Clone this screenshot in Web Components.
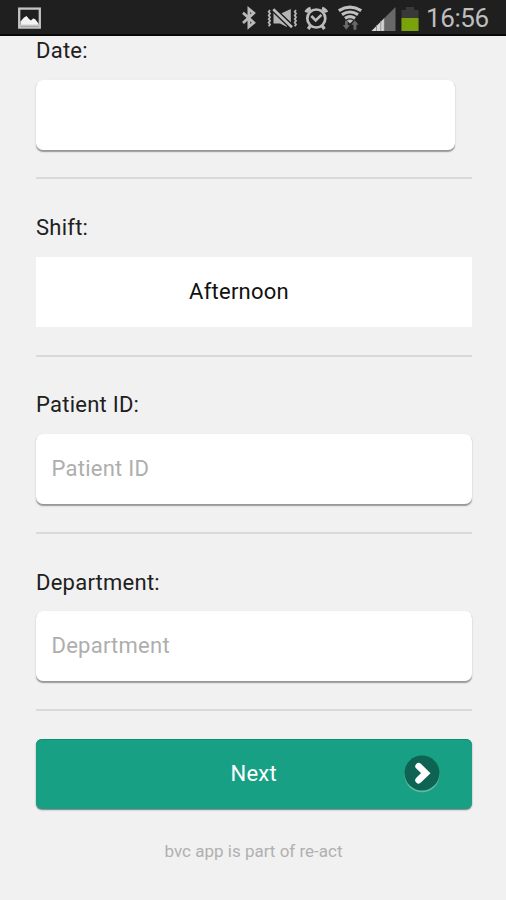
<!DOCTYPE html>
<html lang="en">
<head>
<meta charset="utf-8">
<title>bvc app</title>
<style>
html,body{margin:0;height:100%;background:#f1f1f1}
body{font-family:Roboto,"Liberation Sans",sans-serif;color:#222;overflow:hidden}
</style>
</head>
<body>
<bvc-screen>
  <status-bar slot="status" time="16:56"></status-bar>
  <form-field label="Date:" narrow></form-field>
  <form-field label="Shift:" select value="Afternoon"></form-field>
  <form-field label="Patient ID:" hint="Patient ID"></form-field>
  <form-field label="Department:" hint="Department"></form-field>
  <next-button>Next</next-button>
  <app-footer>bvc app is part of re-act</app-footer>
</bvc-screen>
<script>
class Base extends HTMLElement{
  connectedCallback(){
    if(!this.shadowRoot) this.attachShadow({mode:'open'}).innerHTML=this.view();
  }
}
customElements.define('bvc-screen',class extends Base{
  view(){return `<style>
    :host{display:flex;flex-direction:column;height:900px;width:506px}
    main{display:flex;flex-direction:column;padding:0 34px 0 36px}
    </style><slot name="status"></slot><main><slot></slot></main>`}
});
customElements.define('status-bar',class extends Base{
  view(){return `<style>
    :host{display:block;height:36px;background:#1f1f1f;box-sizing:border-box;border-bottom:2px solid #080808}
    .row{display:flex;align-items:center;height:36px;padding:0 17px 0 18px}
    svg{display:block;flex:none}
    .sp{flex:1}
    .time{font-size:26px;line-height:36px;color:#bebebe;width:63px;white-space:nowrap;letter-spacing:-.4px}
    </style><div class="row">
    <svg width="23" height="22" viewBox="0 0 23 22"><rect x="1.2" y="1.6" width="20.6" height="19" fill="none" stroke="#c4c4c4" stroke-width="2.3"/><path d="M2.5 19V14.5L6 10.5 8.5 9 11 12 13 13.5 15 11.5 17 12 20.5 16.5V19Z" fill="#f2f2f2"/><path d="M2 18.6H21" stroke="#c4c4c4" stroke-width="2"/></svg>
    <span class="sp"></span>
    <svg width="157" height="36" viewBox="240 0 157 36" style="margin-right:4px">
      <path d="M243 12.8L253.8 22.7 248.9 26.8V9L253.8 13.1 243 23" fill="none" stroke="#b9b9b9" stroke-width="2.8"/>
      <g fill="none" stroke="#b5b5b5" stroke-width="1.8"><path d="M270 10l-1.3 1.8 1.3 1.8-1.3 1.8 1.3 1.8-1.3 1.8 1.3 1.8-1.3 1.8 1.3 1.8-1.3 1.8"/><path d="M296 10l-1.3 1.8 1.3 1.8-1.3 1.8 1.3 1.8-1.3 1.8 1.3 1.8-1.3 1.8 1.3 1.8-1.3 1.8"/></g>
      <path d="M273.5 12.5H277L287 22.5V27L280 23.5H273.5Z" fill="#b5b5b5"/>
      <path d="M281 13.5L290.8 9V23Z" fill="#b5b5b5"/>
      <path d="M273.3 9.3L292 27.2" stroke="#1f1f1f" stroke-width="5.4"/>
      <path d="M273.3 9.3L292 27.2" stroke="#bdbdbd" stroke-width="2.7"/>
      <g fill="none" stroke="#bcbcbc" stroke-width="2.7"><circle cx="316.3" cy="18.5" r="9"/><path d="M311.3 16L315.7 20.5 321.4 14.8" stroke-width="2.6"/><path d="M306.2 12.3Q307.2 9.4 310.7 8.4M321.9 8.4Q325.4 9.4 326.4 12.3" stroke-width="3.6"/><path d="M310.3 26L308.2 29M322.3 26L324.4 29" stroke-width="3.2"/></g>
      <g fill="none" stroke="#c0c0c0" stroke-width="3.2"><path d="M338.8 10.6Q350 3.8 361.2 10.6"/><path d="M342 14.6Q350 9.4 358 14.6"/><path d="M345 18.4Q350 15 355 18.4"/></g><path d="M346.8 20.4Q350 18.4 353.2 20.4L350 23.6Z" fill="#c0c0c0"/>
      <g fill="#696969"><path d="M345 20.8h2.8v4.3h2.1l-3.6 4.7-3.6-4.7H345Z"/><path d="M353.5 29.8v-5h-2.2l3.6-4.6 3.6 4.6h-2.1v5Z"/></g>
      <path d="M371.5 31L395.5 7V31Z" fill="#686868"/>
      <path d="M371.5 31L384 18.5V31Z" fill="#d5d5d5"/>
      <path d="M376.5 25V31M380.8 21V31M384.3 18V31" stroke="#858585" stroke-width=".8"/>
    </svg>
    <svg width="18" height="36" viewBox="0 0 18 36" style="margin-right:7px"><path d="M.5 10H5V7H13V10H17.5V31H.5Z" fill="#393939"/><rect x=".5" y="18" width="17" height="13" fill="#7aa30b"/></svg>
    <span class="time">${this.getAttribute('time')}</span></div>`}
});
customElements.define('form-field',class extends Base{
  view(){const a=n=>this.getAttribute(n)||'';return `<style>
    :host{display:block;height:177.2px;font-size:22px;letter-spacing:.24px}
    .label{height:43.6px;line-height:29px;color:#202020}
    .box{box-sizing:border-box;height:70.2px;background:#fff;border-radius:7px;margin:0 0 0 -.5px;padding:0 16px;line-height:69px;color:#aeaeae;box-shadow:0 1.2px 1.3px #979797,0 .5px .5px #b4b4b4}
    :host([narrow]) .box{width:419px}
    :host([select]) .box{border-radius:0;box-shadow:none;margin:0;color:#111;text-align:center;padding:0 30px 0 0;line-height:69px}
    .rule{height:2px;background:#d9d9d9;margin-top:27.7px}
    </style><div class="label">${a('label')}</div><div class="box">${a('value')||a('hint')}</div><div class="rule"></div>`}
});
customElements.define('next-button',class extends Base{
  view(){return `<style>
    :host{display:grid;grid-template-columns:1fr 36px;align-items:center;box-sizing:border-box;height:70px;margin-top:-5.8px;margin-left:-.5px;padding:0 32px 0 68px;border-radius:6px;background:#18a085;color:#fff;font-size:22px;letter-spacing:.3px;box-shadow:0 1px 1.5px #777,inset 0 1px #148c75}
    .t{text-align:center}
    svg{display:block}
    </style><span class="t"><slot></slot></span>
    <svg width="36" height="40" viewBox="0 0 36 40"><circle cx="18" cy="20.8" r="17.5" fill="#5dbba8"/><circle cx="18" cy="19" r="17.5" fill="#0e6353"/><path d="M14.6 12.2L21.8 19.2 14.6 26.2" fill="none" stroke="#fff" stroke-width="6.6" stroke-linecap="round"/></svg>`}
});
customElements.define('app-footer',class extends Base{
  view(){return `<style>:host{display:block;text-align:center;font-size:17px;line-height:24px;margin-top:30px;margin-left:-1px;color:#b0b0b0}</style><slot></slot>`}
});
</script>
</body>
</html>
